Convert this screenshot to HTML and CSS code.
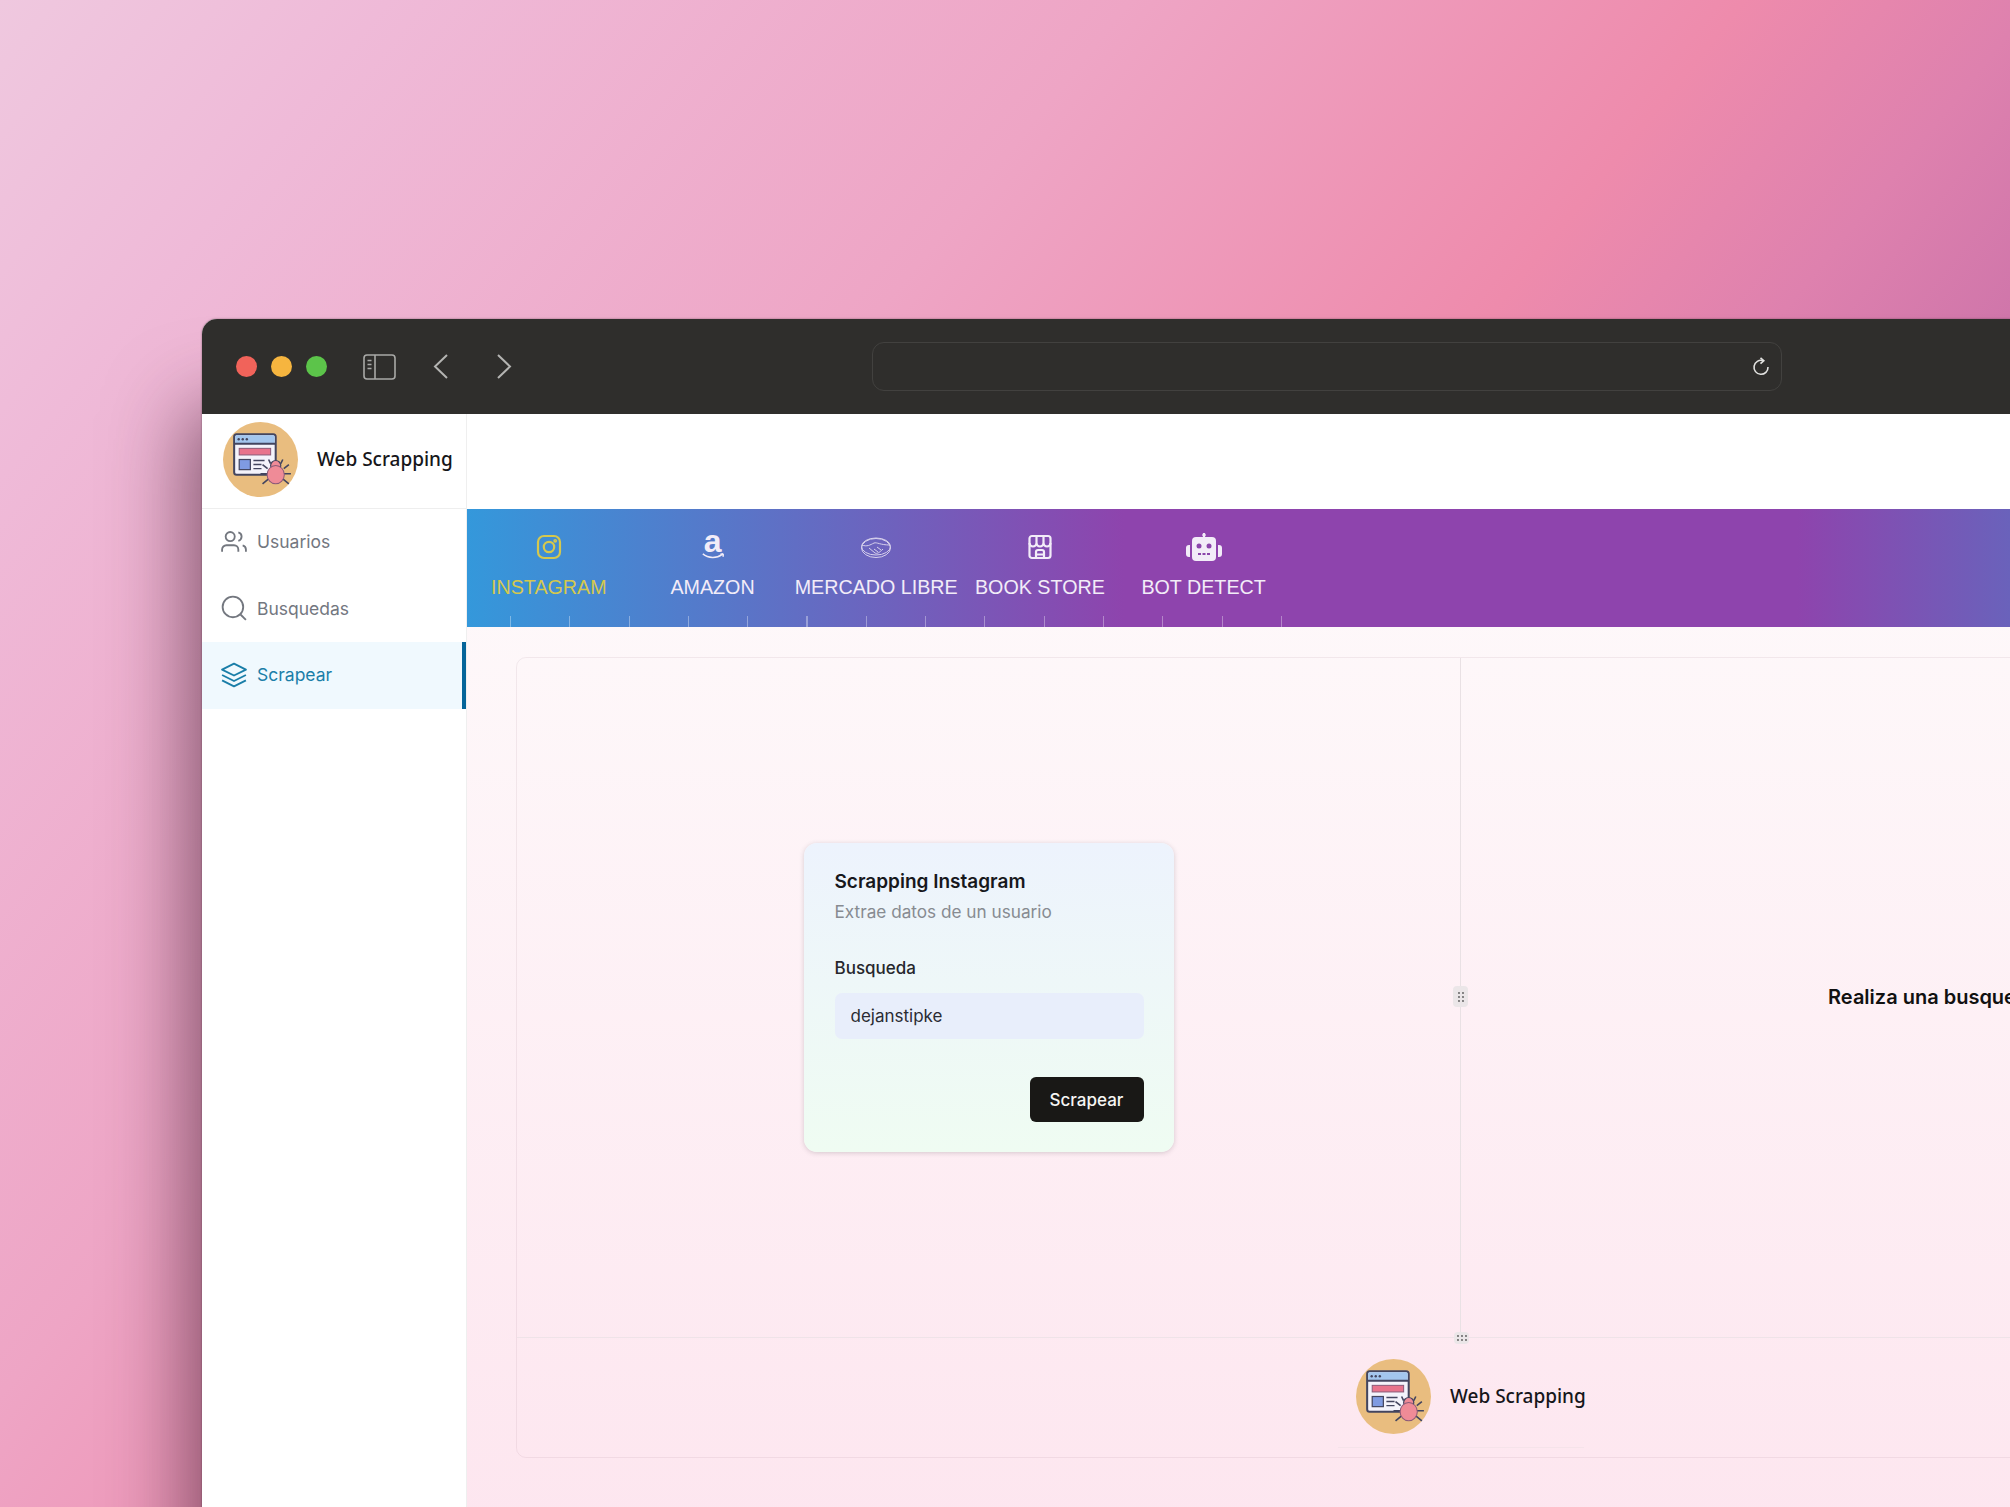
FILE: index.html
```html
<!DOCTYPE html>
<html lang="es">

<head>
  <meta charset="utf-8">
  <title>Web Scrapping</title>
  <link rel="stylesheet" href="styles.css">
</head>

<body>
  <svg class="defs" width="0" height="0">
    <symbol id="logo" viewBox="0 0 74 74">
      <circle cx="37" cy="37" r="37" fill="#e9bd7f" />
      <rect x="11" y="12" width="41" height="40" rx="2.5" fill="#f4f3fb" stroke="#43455f" stroke-width="2" />
      <path d="M12 14.5a1.5 1.5 0 0 1 1.5-1.5H49.5a1.5 1.5 0 0 1 1.5 1.5V21H12z" fill="#a3c6ee" />
      <path d="M11 21.5H52" stroke="#43455f" stroke-width="2" />
      <circle cx="15.5" cy="17" r="1.2" fill="#43455f" />
      <circle cx="19.5" cy="17" r="1.2" fill="#43455f" />
      <circle cx="23.5" cy="17" r="1.2" fill="#43455f" />
      <rect x="16" y="26" width="31" height="6.5" fill="#e8738c" stroke="#8b5a78" stroke-width="1" />
      <rect x="16" y="37" width="11" height="10" fill="#7f9be2" stroke="#43455f" stroke-width="1.2" />
      <path d="M30 38H41M30 42H38M30 46H38" stroke="#43455f" stroke-width="1.4" />
      <path d="M44 46l-5-4M44 51h-7M45 56l-6 5M60 46l5-4M60 51h7M59 56l6 5M47 41l-2-4M57 41l2-4" stroke="#43455f" stroke-width="1.6" fill="none" />
      <circle cx="52" cy="43" r="5" fill="#ef8b97" stroke="#43455f" stroke-width="1.2" />
      <ellipse cx="52" cy="52" rx="8.5" ry="9" fill="#ef8b97" stroke="#8b5a78" stroke-width="1" />
    </symbol>
  </svg>

  <div class="window">
    <div class="titlebar">
      <span class="light light-red"></span>
      <span class="light light-yellow"></span>
      <span class="light light-green"></span>
      <svg class="toggle-icon" width="33" height="26" viewBox="0 0 33 26" fill="none" stroke="#a9a9a7" stroke-width="1.6">
        <rect x="1" y="1" width="31" height="24" rx="3" />
        <path d="M12 1V25M4.500 6.500H8.500M4.500 10.500H8.500M4.500 14.500H8.500" />
      </svg>
      <svg class="back-icon" width="15" height="25" viewBox="0 0 15 25" fill="none" stroke="#b4b4b2" stroke-width="2">
        <path d="M14 1L2 12.500L14 24" />
      </svg>
      <svg class="forward-icon" width="15" height="25" viewBox="0 0 15 25" fill="none" stroke="#b4b4b2" stroke-width="2">
        <path d="M1 1L13 12.500L1 24" />
      </svg>
      <div class="address">
        <svg width="18" height="20" viewBox="0 0 18 20" fill="none" stroke="#e2e2e0" stroke-width="1.6">
          <path d="M11 3.600A7 7 0 1 0 16 10" />
          <path d="M8.500 .8L11.800 3.700L8.500 6.600" />
        </svg>
      </div>
    </div>

    <div class="app">
      <aside class="sidebar">
        <div class="brand">
          <svg class="brand-logo"><use href="#logo" /></svg>
          <span class="brand-name">Web Scrapping</span>
        </div>
        <nav>
          <a class="nav-item">
            <svg width="26" height="26" viewBox="0 0 24 24" fill="none" stroke="currentColor" stroke-width="1.7">
              <path d="M16 21v-2a4 4 0 0 0-4-4H5a4 4 0 0 0-4 4v2" />
              <circle cx="8.500" cy="7" r="4.200" />
              <path d="M23 21v-2a4 4 0 0 0-3-3.870M16 3.130a4 4 0 0 1 0 7.750" />
            </svg>
            Usuarios
          </a>
          <a class="nav-item">
            <svg width="26" height="26" viewBox="0 0 24 24" fill="none" stroke="currentColor" stroke-width="1.7">
              <circle cx="11" cy="11" r="9.500" />
              <path d="M23 23l-5-5" />
            </svg>
            Busquedas
          </a>
          <a class="nav-item nav-item-active">
            <svg width="26" height="26" viewBox="0 0 24 24" fill="none" stroke="currentColor" stroke-width="1.7" stroke-linejoin="round">
              <path d="M12 1.500L1 7L12 12.500L23 7z" />
              <path d="M1 12L12 17.500L23 12M1 17L12 22.500L23 17" />
            </svg>
            Scrapear
          </a>
        </nav>
      </aside>

      <main class="main">
        <div class="topbar"></div>

        <div class="tabs">
          <a class="tab tab-active">
            <svg width="26" height="26" viewBox="0 0 26 26" fill="none" stroke="currentColor" stroke-width="2.200">
              <rect x="2" y="2" width="22" height="22" rx="6" />
              <circle cx="13" cy="13" r="5.200" />
              <circle cx="19.200" cy="6.800" r=".8" />
            </svg>
            INSTAGRAM
          </a>
          <a class="tab">
            <div class="amazon">
              <span class="amazon-a">a</span>
              <svg width="26" height="9" viewBox="0 0 26 9">
                <path d="M2 1C8 6 17 6 23 1.500M24 .8L21 1.200M24 .8L24 4" fill="none" stroke="currentColor" stroke-width="1.600" />
              </svg>
            </div>
            AMAZON
          </a>
          <a class="tab">
            <svg width="32" height="26" viewBox="0 0 32 26" fill="none" stroke="currentColor" stroke-width="1" opacity=".8">
              <ellipse cx="16" cy="14" rx="14.500" ry="9.500" />
              <ellipse cx="16" cy="12.500" rx="14.500" ry="8.500" />
              <path d="M2 11C7 13 10 11 14 9C17 8 20 11 30 11M9 14L15 19C17 20 19 19 23 15M14 15L18 18M17 13L21 16" />
            </svg>
            MERCADO LIBRE
          </a>
          <a class="tab">
            <svg width="26" height="26" viewBox="0 0 26 26" fill="none" stroke="currentColor" stroke-width="2.200" stroke-linejoin="round">
              <rect x="2.500" y="2" width="21" height="22" rx="2.500" />
              <path d="M2.500 9A3.500 3.500 0 0 0 9.500 9V2M9.500 9A3.500 3.500 0 0 0 16.500 9V2M16.500 9A3.500 3.500 0 0 0 23.500 9" />
              <path d="M9 24V18A2 2 0 0 1 11 16H15A2 2 0 0 1 17 18V24M9 20.500H17" />
            </svg>
            BOOK STORE
          </a>
          <a class="tab">
            <svg width="38" height="28" viewBox="0 0 38 28" fill="currentColor">
              <rect x="18" y="0" width="2" height="5" />
              <circle cx="19" cy="2" r="1.800" />
              <rect x="7" y="4" width="24" height="24" rx="4" />
              <path d="M1 15a3 3 0 0 1 3-3h1v12H4a3 3 0 0 1-3-3zM37 15a3 3 0 0 0-3-3h-1v12h1a3 3 0 0 0 3-3z" />
              <circle cx="14" cy="13" r="2.500" fill="#8b45ab" />
              <circle cx="24" cy="13" r="2.500" fill="#8b45ab" />
              <path d="M13 21H25" stroke="#8b45ab" stroke-width="2" stroke-dasharray="3 1.500" />
            </svg>
            BOT DETECT
          </a>
        </div>

        <div class="content">
          <section class="panel">
            <div class="pane-row">
              <div class="pane pane-form">
                <form class="card">
                  <h2 class="card-title">Scrapping Instagram</h2>
                  <p class="card-sub">Extrae datos de un usuario</p>
                  <label class="card-label" for="busqueda">Busqueda</label>
                  <input class="card-input" id="busqueda" type="text" value="dejanstipke">
                  <div class="card-actions">
                    <button class="card-btn" type="button">Scrapear</button>
                  </div>
                </form>
                <span class="grip grip-v">
                  <svg width="6" height="10" viewBox="0 0 6 10" fill="#555"><circle cx="1" cy="1" r=".9" /><circle cx="5" cy="1" r=".9" /><circle cx="1" cy="5" r=".9" /><circle cx="5" cy="5" r=".9" /><circle cx="1" cy="9" r=".9" /><circle cx="5" cy="9" r=".9" /></svg>
                </span>
              </div>
              <div class="pane pane-result">Realiza una busqueda</div>
            </div>
            <div class="footer">
              <span class="grip grip-h">
                <svg width="10" height="6" viewBox="0 0 10 6" fill="#555"><circle cx="1" cy="1" r=".9" /><circle cx="5" cy="1" r=".9" /><circle cx="9" cy="1" r=".9" /><circle cx="1" cy="5" r=".9" /><circle cx="5" cy="5" r=".9" /><circle cx="9" cy="5" r=".9" /></svg>
              </span>
              <div class="footer-brand">
                <svg class="brand-logo"><use href="#logo" /></svg>
                <span class="brand-name">Web Scrapping</span>
              </div>
            </div>
          </section>
        </div>
      </main>
    </div>
  </div>
</body>

</html>
```

FILE: styles.css
```css
* {
  box-sizing: border-box;
}

html,
body {
  margin: 0;
  height: 1507px;
  overflow: hidden;
}

body {
  padding: 319px 0 0 202px;
  font-family: Inter, "Liberation Sans", sans-serif;
  background: linear-gradient(129deg, #efc8df 0%, #efbad8 12%, #eea5c5 35%, #ee8bac 54%, #de81ae 63%, #c870a8 74%);
}

.defs {
  position: absolute;
}

.window {
  width: 2253px;
  height: 1300px;
  border-radius: 15px 15px 0 0;
  box-shadow: -14px 90px 80px rgba(60, 25, 45, 0.6), 0 0 2px rgba(60, 40, 50, 0.6);
  background: #fff;
  display: flex;
  flex-direction: column;
}

/* barra del navegador */
.titlebar {
  height: 95px;
  flex: none;
  display: flex;
  align-items: center;
  padding-left: 34px;
  background: #2f2e2c;
  border-radius: 15px 15px 0 0;
}

.light {
  width: 21px;
  height: 21px;
  border-radius: 50%;
  margin-right: 14px;
}

.light-red {
  background: #f1635a;
}

.light-yellow {
  background: #f6b53f;
}

.light-green {
  background: #5cc44a;
}

.toggle-icon {
  margin-left: 22px;
}

.back-icon {
  margin-left: 37px;
}

.forward-icon {
  margin-left: 49px;
}

.address {
  width: 910px;
  height: 49px;
  margin-left: 360px;
  padding-right: 11px;
  display: flex;
  align-items: center;
  justify-content: flex-end;
  border: 1px solid #42413f;
  border-radius: 12px;
}

.app {
  flex: 1;
  display: flex;
}

/* sidebar */
.sidebar {
  width: 265px;
  flex: none;
  border-right: 1px solid #efefef;
  background: #fff;
}

.brand {
  height: 95px;
  display: flex;
  align-items: center;
  gap: 19px;
  padding: 0 0 4px 21px;
  border-bottom: 1px solid #eee;
}

.brand-logo {
  width: 75px;
  height: 75px;
  flex: none;
}

.brand-name {
  font-family: "Noto Sans", sans-serif;
  font-size: 19px;
  font-weight: 500;
  color: #16161a;
  white-space: nowrap;
}

.nav-item {
  height: 66.500px;
  display: flex;
  align-items: center;
  gap: 10px;
  padding: 0 0 1px 19px;
  font-size: 17.500px;
  color: #73777f;
}

.nav-item-active {
  color: #1a7ea8;
  background: #f0f9fe;
  border-right: 4px solid #05659a;
}

/* tabs */
.main {
  flex: 1;
  min-width: 0;
  background: linear-gradient(#fefcfc, #fde4ee);
}

.topbar {
  height: 95px;
  background: #fff;
}

.tabs {
  position: relative;
  height: 118px;
  display: flex;
  align-items: flex-start;
  padding-top: 24px;
  background: linear-gradient(90deg, #3498db 0, #8e44ad 657px, #8e44ad 1330px, #6a62bb 1543px);
}

.tabs::after {
  content: "";
  position: absolute;
  left: 43px;
  bottom: 0;
  width: 772px;
  height: 11px;
  background: repeating-linear-gradient(90deg, rgba(255, 255, 255, 0.35) 0 1px, transparent 1px 59.300px);
}

.tab {
  width: 163.700px;
  display: flex;
  flex-direction: column;
  align-items: center;
  font-family: "Liberation Sans", Arial, sans-serif;
  font-size: 19.700px;
  line-height: 24px;
  color: #f2ecf8;
  white-space: nowrap;
}

.tab svg {
  height: 28px;
  margin-bottom: 14px;
}

.tab-active {
  color: #d5c84e;
}

.amazon {
  height: 28px;
  margin-bottom: 14px;
  display: flex;
  flex-direction: column;
  align-items: center;
}

.amazon-a {
  height: 18px;
  font-size: 32px;
  font-weight: 700;
  line-height: 16px;
}

.amazon svg {
  height: 9px;
  margin: 3px 0 0;
}

/* contenido */
.content {
  padding: 30px 49px;
}

.panel {
  width: 1890px;
  height: 801px;
  border: 1px solid rgba(120, 80, 100, 0.09);
  border-radius: 10px;
  display: flex;
  flex-direction: column;
}

.pane-row {
  height: 679px;
  display: flex;
}

.pane {
  width: 946px;
  display: flex;
  align-items: center;
  justify-content: center;
}

.pane-form {
  position: relative;
  border-right: 1px solid #e9e1e4;
}

.pane-result {
  padding: 0 0 2px 2px;
  font-size: 20px;
  font-weight: 600;
  color: #111;
}

.grip {
  position: absolute;
  display: flex;
  align-items: center;
  justify-content: center;
  background: #ebe6e8;
  border-radius: 4px;
}

.grip-v {
  right: -8px;
  top: 328px;
  width: 15px;
  height: 21px;
}

.grip-h {
  left: 937px;
  top: -6px;
  width: 15px;
  height: 12px;
}

.card {
  width: 370px;
  height: 309px;
  padding: 27px 30px 0 31px;
  border-radius: 13px;
  background: linear-gradient(#edf3fd, #effcf2);
  box-shadow: 0 1px 5px rgba(70, 60, 70, 0.22);
}

.card-title {
  margin: 0;
  font-size: 19px;
  font-weight: 600;
  line-height: 24px;
  color: #17181c;
}

.card-sub {
  margin: 6px 0 0;
  font-size: 17.200px;
  line-height: 24px;
  color: #878b91;
}

.card-label {
  display: block;
  margin-top: 32px;
  font-size: 17px;
  font-weight: 500;
  line-height: 24px;
  color: #26272c;
}

.card-input {
  display: block;
  width: 100%;
  height: 46px;
  margin-top: 13px;
  padding: 0 16px;
  border: none;
  border-radius: 7px;
  font-family: Inter, "Liberation Sans", sans-serif;
  font-size: 17px;
  color: #2a2b33;
  background: #e8eefb;
}

.card-actions {
  display: flex;
  justify-content: flex-end;
  margin-top: 38px;
}

.card-btn {
  width: 114px;
  height: 45px;
  border: none;
  border-radius: 6px;
  font-family: Inter, "Liberation Sans", sans-serif;
  font-size: 17px;
  font-weight: 500;
  color: #f5f5f3;
  background: #191816;
}

.footer {
  position: relative;
  flex: 1;
  display: flex;
  justify-content: center;
  border-top: 1px solid #efe3e8;
}

.footer-brand {
  width: 246px;
  height: 110px;
  display: flex;
  align-items: center;
  gap: 19px;
  padding: 7px 0 0 18px;
  border-bottom: 1px solid #f5e3ea;
}
```
